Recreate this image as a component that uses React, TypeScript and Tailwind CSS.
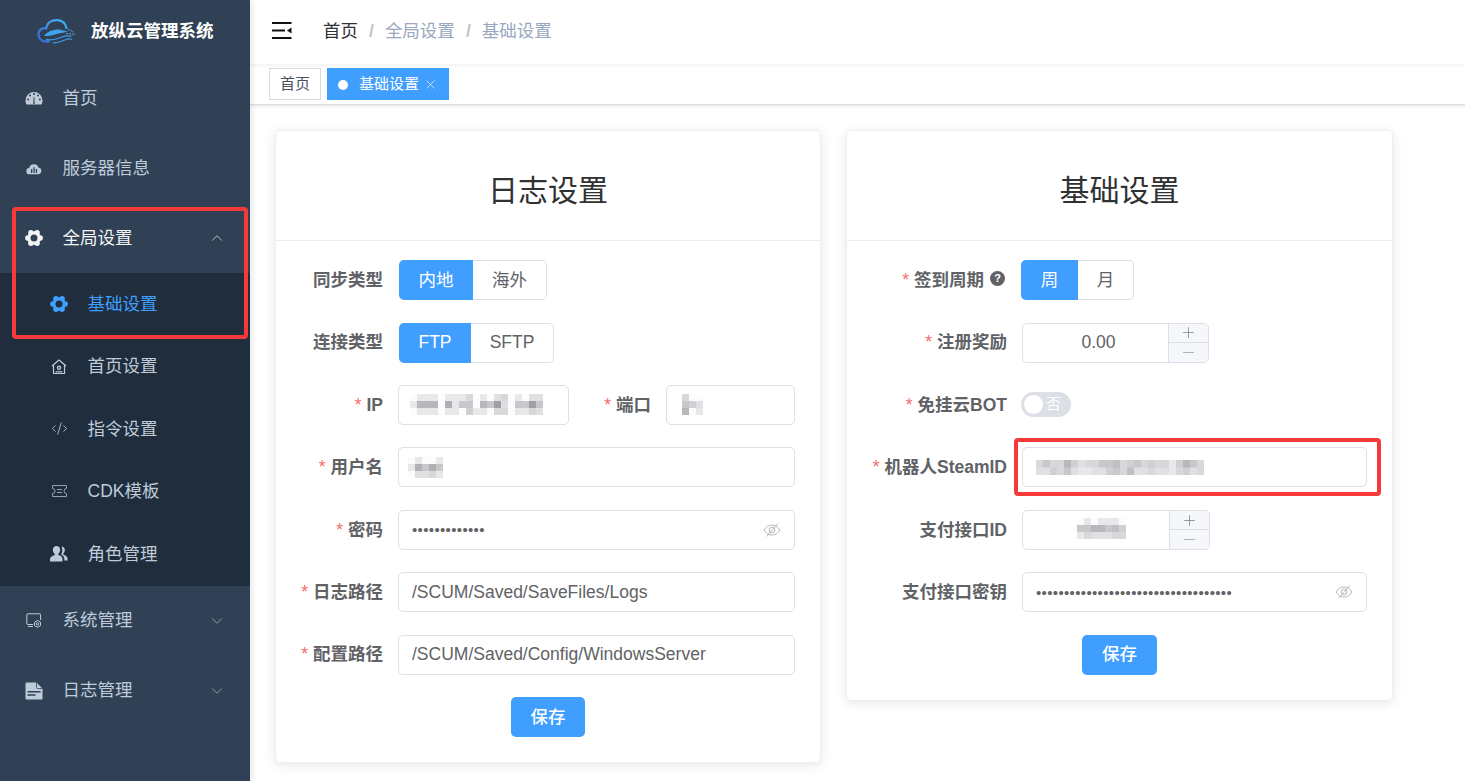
import type { ReactNode } from 'react'
import { ChevronDown, ChevronUp, Code2, Minus, Plus, X } from 'lucide-react'

const fontStack = "font-['Liberation_Sans','Noto_Sans_CJK_SC',sans-serif]"

const lobes = [0, 60, 120, 180, 240, 300]

function GearIcon({ color, hole, className }: { color: string; hole: string; className: string }) {
  return (
    <svg viewBox="0 0 18 18" className={className}>
      <circle cx="9" cy="9" r="6.800" fill={color} />
      {lobes.map((a) => (
        <circle key={a} cx={9 + 6.200 * Math.cos((a * Math.PI) / 180)} cy={9 + 6.200 * Math.sin((a * Math.PI) / 180)} r="2.700" fill={color} />
      ))}
      <circle cx="9" cy="9" r="3.500" fill={hole} />
    </svg>
  )
}

function GaugeIcon() {
  return (
    <svg viewBox="0 0 18 16" className="w-[18px] h-4">
      <path d="M0.500 10.500a8.500 8.500 0 0 1 17 0c0 1.800-.4 3-1 4H1.500c-.6-1-1-2.200-1-4z" fill="#bfcbd9" />
      <g fill="#304156">
        <circle cx="9" cy="4" r="1" />
        <circle cx="5" cy="5.600" r="1" />
        <circle cx="13" cy="5.600" r="1" />
        <circle cx="3.200" cy="9.400" r="1" />
        <circle cx="14.800" cy="9.400" r="1" />
        <path d="M8.300 14l.3-7h.8l.3 7z" />
      </g>
    </svg>
  )
}

function CloudIcon() {
  return (
    <svg viewBox="0 0 18 14" className="w-4 h-[13px]">
      <path d="M4.200 13.500a3.500 3.500 0 0 1-.6-7A5.400 5.400 0 0 1 14 5.800a3.900 3.900 0 0 1 0 7.700z" fill="#bfcbd9" />
      <g fill="#304156">
        <rect x="5.600" y="7.600" width="1.500" height="4.400" />
        <rect x="8.300" y="5.600" width="1.500" height="6.400" />
        <rect x="11" y="7.600" width="1.500" height="4.400" />
      </g>
    </svg>
  )
}

function HomeGearIcon() {
  return (
    <svg viewBox="0 0 16 16" fill="none" stroke="#bfcbd9" strokeWidth="1.200" className="w-4 h-4">
      <path d="M1 7l7-6 7 6M2.500 6v8.500h11V6" strokeLinejoin="round" />
      <circle cx="8" cy="8.800" r="2.200" fill="#bfcbd9" stroke="none" />
      <circle cx="8" cy="8.800" r=".9" fill="#1f2d3d" stroke="none" />
      <path d="M4.500 12.800h7" />
    </svg>
  )
}

function TicketIcon() {
  return (
    <svg viewBox="0 0 15 12" fill="none" stroke="#94a1b1" strokeWidth="1" className="w-[15px] h-3">
      <path d="M.5.500h14v3a2.500 2.500 0 0 0 0 5v3H.5v-3a2.500 2.500 0 0 0 0-5z" />
      <path d="M5 4.500h5M5 7.500h5" />
    </svg>
  )
}

function UsersIcon() {
  return (
    <svg viewBox="0 0 18 17" fill="#bfcbd9" className="w-[18px] h-[17px]">
      <path d="M6.500 1a3.600 3.600 0 0 1 3.600 4c0 1.700-.8 3.100-1.800 3.800v1.200c2.200.6 4.200 1.800 4.200 3.500V16.500H0v-2.500c0-1.700 2.500-3.300 4.700-4V8.800C3.700 8.100 2.900 6.700 2.900 5A3.600 3.600 0 0 1 6.500 1z" />
      <path d="M11.500 1.500c2 0 3.300 1.500 3.300 3.500 0 1.500-.6 2.800-1.500 3.500v1.200c2 .6 4.200 1.700 4.200 3.600v2.200h-3.200v-2c0-1.700-1.300-3-3.300-4 .9-1.200 1.300-2.700 1.300-4.500 0-1.500-.3-2.600-.8-3.500z" />
    </svg>
  )
}

function MonitorGearIcon() {
  return (
    <svg viewBox="0 0 16 15" fill="none" stroke="#bfcbd9" strokeWidth="1" className="w-4 h-[15px]">
      <path d="M7 11.500H2a1.200 1.200 0 0 1-1.200-1.200V2A1.200 1.200 0 0 1 2 .800h11.400A1.200 1.200 0 0 1 14.600 2v5" />
      <path d="M2 13.500h5" />
      <polygon points="11.500,7.500 14.500,9.200 14.500,12.600 11.500,14.300 8.500,12.600 8.500,9.200" />
      <circle cx="11.500" cy="10.900" r="1.200" />
    </svg>
  )
}

function DocumentIcon() {
  return (
    <svg viewBox="0 0 18 18" className="w-[18px] h-[18px]">
      <path d="M1.500.500h10l6 6v10a1 1 0 0 1-1 1h-15a1 1 0 0 1-1-1v-15a1 1 0 0 1 1-1z" fill="#bfcbd9" />
      <path d="M11.500.500v5a1 1 0 0 0 1 1h5" fill="none" stroke="#304156" strokeWidth=".8" />
      <path d="M2.500 9.800h13M2.500 13h8" stroke="#304156" strokeWidth="1.500" />
    </svg>
  )
}

function LogoIcon() {
  return (
    <svg viewBox="0 0 40 25" fill="none" className="w-10 h-[25px]">
      <defs>
        <linearGradient id="logoGrad" x1="0" y1="1" x2="1" y2="0">
          <stop offset="0" stopColor="#3a62d8" />
          <stop offset="0.500" stopColor="#3f8fe8" />
          <stop offset="1" stopColor="#3fb8f0" />
        </linearGradient>
      </defs>
      <path d="M12 22.500C5 23.500 1.500 19.500 1.500 15.500 1.500 11 5 8.500 9 9.500 10 4 14.500 1.200 20 1.200c5 0 9 3.300 9.500 8" stroke="url(#logoGrad)" strokeWidth="2.200" strokeLinecap="round" />
      <path d="M7 17C10 12 18 10 22 10.500c3 .5 5 1.500 9 2-5 1.500-9 1.500-13 3-4 1.500-8 1.500-11 1.500z" fill="#3fa6ee" />
      <path d="M9 20.500c6 1.500 11-.5 16-2.500 3-1.200 6-1.500 9.500-.8" stroke="#3f9be8" strokeWidth="1.300" />
      <path d="M16 23.800c5 .5 9-1.800 13-3.300 2-.8 4-.8 6-.3" stroke="#3f9be8" strokeWidth="1.100" />
      <path d="M29 14.800c3-.5 6 0 9.500 1M31 10.500c2 .3 4 1.500 6 2.800" stroke="#6bb8ee" strokeWidth=".9" strokeDasharray="2 1" />
    </svg>
  )
}

function MenuFoldIcon() {
  return (
    <svg viewBox="0 0 20 17" className="w-5 h-[17px]">
      <path d="M0 1h19.500M0 8.500h13M0 16h19.500" stroke="#111" strokeWidth="2" />
      <path d="M19.500 5.500v6L15 8.500z" fill="#111" />
    </svg>
  )
}

function EyeOffIcon() {
  return (
    <svg viewBox="0 0 18 16" fill="none" stroke="#b4b7bd" strokeWidth="1" className="w-[18px] h-4">
      <path d="M1 8c2-3.200 4.800-5 8-5s6 1.800 8 5c-2 3.200-4.800 5-8 5S3 11.200 1 8z" />
      <circle cx="9" cy="8" r="2.800" />
      <path d="M3.500 14.500 15 1.500" />
    </svg>
  )
}

// grey blocks standing in for the blurred values, one hex digit per cell
function Mosaic({ rows, cellH = 7 }: { rows: string[]; cellH?: number }) {
  const cell = 7
  return (
    <svg width={rows[0].length * cell} height={rows.length * cellH} className="block shrink-0 blur-[0.5px]">
      {rows.map((row, y) =>
        row.split('').map((c, x) => {
          const n = parseInt(c, 16)
          const v = n === 15 ? 252 : 120 + n * 8
          return <rect key={x} x={x * cell} y={y * cellH} width={cell + 0.5} height={cellH + 0.5} fill={`rgb(${v},${v},${v + 2})`} />
        })
      )}
    </svg>
  )
}

function SideItem({ icon, label, color = 'text-[#bfcbd9]', chevron }: { icon: ReactNode; label: string; color?: string; chevron?: 'up' | 'down' }) {
  return (
    <div className={`flex items-center h-[70px] pl-[25px] pr-[24px] ${color}`}>
      <span className="w-[18px] flex justify-center">{icon}</span>
      <span className="ml-[19.500px] flex-1">{label}</span>
      {chevron === 'up' && <ChevronUp className="w-[18px] h-[18px] text-[#d5dae1]" strokeWidth={1.100} />}
      {chevron === 'down' && <ChevronDown className="w-[18px] h-[18px] text-[#a0a8b4]" strokeWidth={1.100} />}
    </div>
  )
}

function SubItem({ icon, label, color = 'text-[#bfcbd9]' }: { icon: ReactNode; label: string; color?: string }) {
  return (
    <div className={`flex items-center h-[62.400px] pl-[50px] ${color}`}>
      <span className="w-[18px] flex justify-center">{icon}</span>
      <span className="ml-[19.500px]">{label}</span>
    </div>
  )
}

function Sidebar() {
  return (
    <aside className="w-[250px] shrink-0 bg-[#304156] z-10 shadow-[2px_0_6px_rgba(0,21,41,0.1)]">
      <div className="h-[63px] flex items-center pl-[37px]">
        <LogoIcon />
        <span className="ml-[14px] font-bold text-white">放纵云管理系统</span>
      </div>
      <SideItem icon={<GaugeIcon />} label="首页" />
      <SideItem icon={<CloudIcon />} label="服务器信息" />
      <SideItem
        icon={<GearIcon color="#f4f4f5" hole="#304156" className="w-[18px] h-[18px]" />}
        label="全局设置"
        color="text-[#f4f4f5]"
        chevron="up"
      />
      <div className="bg-[#1f2d3d] h-[312.500px]">
        <SubItem icon={<GearIcon color="#409eff" hole="#1f2d3d" className="w-[18px] h-[18px]" />} label="基础设置" color="text-[#409eff]" />
        <SubItem icon={<HomeGearIcon />} label="首页设置" />
        <SubItem icon={<Code2 className="w-[17px] h-[17px]" strokeWidth={1.200} />} label="指令设置" />
        <SubItem icon={<TicketIcon />} label="CDK模板" />
        <SubItem icon={<UsersIcon />} label="角色管理" />
      </div>
      <SideItem icon={<MonitorGearIcon />} label="系统管理" chevron="down" />
      <SideItem icon={<DocumentIcon />} label="日志管理" chevron="down" />
    </aside>
  )
}

function Navbar() {
  return (
    <div className="h-[64px] flex items-center pb-px bg-white shadow-[0_1px_4px_rgba(0,21,41,0.08)] z-[2] relative">
      <span className="ml-[22px] mr-[31px] mb-[3px] flex"><MenuFoldIcon /></span>
      <span className="text-[#303133]">首页</span>
      <span className="mx-[11px] font-bold text-[#c0c4cc]">/</span>
      <span className="text-[#97a8be]">全局设置</span>
      <span className="mx-[11px] font-bold text-[#c0c4cc]">/</span>
      <span className="text-[#97a8be]">基础设置</span>
    </div>
  )
}

function TagsBar() {
  return (
    <div className="h-[41px] flex items-start pt-[4px] pl-[19px] gap-[6px] bg-white text-[15px] border-b border-[#d8dce5] shadow-[0_1px_3px_rgba(0,0,0,0.12)] z-[1] relative">
      <div className="h-8 w-[52px] pt-px flex items-center justify-center border border-[#d8dce5] text-[#495060]">首页</div>
      <div className="h-8 w-[122px] pt-px flex items-center bg-[#409eff] text-white pl-[11px]">
        <span className="w-[10px] h-[10px] rounded-full bg-white" />
        <span className="ml-[11px]">基础设置</span>
        <X className="w-[15px] h-[15px] ml-[4px]" strokeWidth={1} />
      </div>
    </div>
  )
}

function Label({ text, required, width }: { text: string; required?: boolean; width: string }) {
  return (
    <label className={`${width} shrink-0 pr-[15px] text-right font-bold text-[#606266] whitespace-nowrap`}>
      {required && <span className="text-[#f56c6c] font-normal mr-[5px]">*</span>}
      {text}
    </label>
  )
}

function Field({ children, className = 'flex-1' }: { children?: ReactNode; className?: string }) {
  return (
    <div className={`${className} h-10 flex items-center px-[13px] bg-white border border-[#dcdfe6] rounded-[5px] text-[#606266]`}>
      {children}
    </div>
  )
}

function PasswordField({ count }: { count: number }) {
  return (
    <Field>
      <span className="flex-1 text-[15px] tracking-[0.35px] leading-none">{'•'.repeat(count)}</span>
      <EyeOffIcon />
    </Field>
  )
}

function RadioGroup({ options }: { options: { label: string; width: string }[] }) {
  return (
    <div className="flex h-10">
      {options.map((o, i) => (
        <div
          key={o.label}
          className={
            i === 0
              ? `${o.width} flex items-center justify-center bg-[#409eff] text-white rounded-l-[5px]`
              : `${o.width} flex items-center justify-center bg-white text-[#606266] border border-l-0 border-[#dcdfe6] rounded-r-[5px]`
          }
        >
          {o.label}
        </div>
      ))}
    </div>
  )
}

function NumberInput({ children, width }: { children: ReactNode; width: string }) {
  return (
    <div className={`${width} h-10 flex border border-[#dcdfe6] rounded-[5px] text-[#606266] overflow-hidden`}>
      <div className="flex-1 flex items-center justify-center pl-[6px]">{children}</div>
      <div className="w-[40px] flex flex-col bg-[#f5f7fa] border-l border-[#dcdfe6]">
        <span className="flex-1 flex items-center justify-center border-b border-[#dcdfe6] text-[#85888e]">
          <Plus className="w-[17px] h-[17px]" strokeWidth={1.200} />
        </span>
        <span className="flex-1 flex items-center justify-center text-[#a0a3a9]">
          <Minus className="w-[17px] h-[17px]" strokeWidth={1.200} />
        </span>
      </div>
    </div>
  )
}

function SaveButton({ width }: { width: string }) {
  return (
    <div className="flex justify-center">
      <button className={`${width} h-10 rounded-[5px] bg-[#409eff] text-white font-medium`}>保存</button>
    </div>
  )
}

function Card({ title, children, className }: { title: string; children: ReactNode; className: string }) {
  return (
    <section className={`${className} bg-white border border-[#ebeef5] rounded-[5px] shadow-[0_2px_12px_rgba(0,0,0,0.1)]`}>
      <h2 className="h-[110px] pt-[10px] flex items-center justify-center text-[30px] text-[#303133] border-b border-[#ebeef5]">{title}</h2>
      <div className="flex flex-col gap-[22.400px] pt-[19.200px] pb-[25px] px-[25px]">{children}</div>
    </section>
  )
}

function LogSettings() {
  const lw = 'w-[97px]'
  return (
    <Card title="日志设置" className="w-[546px]">
      <div className="flex items-center">
        <Label text="同步类型" width={lw} />
        <div className="ml-px">
          <RadioGroup options={[{ label: '内地', width: 'w-[74px]' }, { label: '海外', width: 'w-[74px]' }]} />
        </div>
      </div>
      <div className="flex items-center">
        <Label text="连接类型" width={lw} />
        <div className="ml-px">
          <RadioGroup options={[{ label: 'FTP', width: 'w-[72px]' }, { label: 'SFTP', width: 'w-[83px]' }]} />
        </div>
      </div>
      <div className="flex items-center">
        <Label text="IP" required width={lw} />
        <Field className="w-[171px]">
          <span className="-ml-[2px]">
            <Mosaic rows={['feeefeeecfefdcfefdd', 'e888f7eaaf8a5dfaa5a', 'feeefeefbeefccfeecd']} />
          </span>
        </Field>
        <Label text="端口" required width="w-[97px]" />
        <Field className="flex-1">
          <span className="ml-[2px]"><Mosaic rows={['cff', 'abd', '8fe']} /></span>
        </Field>
      </div>
      <div className="flex items-center">
        <Label text="用户名" required width={lw} />
        <Field>
          <span className="-ml-[4px]"><Mosaic rows={['feffe', 'e7a7a', 'fddce']} /></span>
        </Field>
      </div>
      <div className="flex items-center">
        <Label text="密码" required width={lw} />
        <PasswordField count={13} />
      </div>
      <div className="flex items-center">
        <Label text="日志路径" required width={lw} />
        <Field>/SCUM/Saved/SaveFiles/Logs</Field>
      </div>
      <div className="flex items-center">
        <Label text="配置路径" required width={lw} />
        <Field>/SCUM/Saved/Config/WindowsServer</Field>
      </div>
      <SaveButton width="w-[74px]" />
    </Card>
  )
}

function BasicSettings() {
  const lw = 'w-[150px]'
  return (
    <Card title="基础设置" className="w-[547px]">
      <div className="flex items-center">
        <label className={`${lw} shrink-0 pr-[17px] flex items-center justify-end font-bold text-[#606266]`}>
          <span className="text-[#f56c6c] font-normal mr-[5px]">*</span>
          签到周期
          <span className="ml-[6px] mb-[3px] w-[15px] h-[15px] rounded-full bg-[#606266] text-white text-[11px] leading-none flex items-center justify-center">?</span>
        </label>
        <div className="-ml-px">
          <RadioGroup options={[{ label: '周', width: 'w-[57px]' }, { label: '月', width: 'w-[56px]' }]} />
        </div>
      </div>
      <div className="flex items-center">
        <Label text="注册奖励" required width={lw} />
        <NumberInput width="w-[187px]">0.00</NumberInput>
      </div>
      <div className="flex items-center h-10">
        <Label text="免挂云BOT" required width={lw} />
        <div className="-ml-px mb-px w-[50px] h-[25px] rounded-full bg-[#dcdfe6] flex items-center pl-[3px]">
          <span className="w-[19px] h-[19px] rounded-full bg-white" />
          <span className="ml-[3px] text-[15px] text-white">否</span>
        </div>
      </div>
      <div className="flex items-center">
        <Label text="机器人SteamID" required width={lw} />
        <Field>
          <Mosaic cellH={7.500} rows={['cacc8bdccaa9cbacbcceb8ac', 'ddbcadeeddbac9ddcddecbdc']} />
        </Field>
      </div>
      <div className="flex items-center">
        <Label text="支付接口ID" width={lw} />
        <NumberInput width="w-[188px]">
          <span className="ml-[5px] mb-[3px]">
            <Mosaic rows={['fefeeef', 'aa88a9b', 'ecdddcc']} />
          </span>
        </NumberInput>
      </div>
      <div className="flex items-center">
        <Label text="支付接口密钥" width={lw} />
        <PasswordField count={35} />
      </div>
      <SaveButton width="w-[75px]" />
    </Card>
  )
}

export default function App() {
  return (
    <div className={`relative flex h-[781px] w-[1465px] overflow-hidden bg-white text-[17.500px] ${fontStack}`}>
      <Sidebar />
      <main className="flex-1 flex flex-col min-w-0">
        <Navbar />
        <TagsBar />
        <div className="flex items-start gap-[25px] pt-[25px] pl-[25px]">
          <LogSettings />
          <BasicSettings />
        </div>
      </main>
      {/* red annotation boxes drawn over the screenshot */}
      <div className="absolute z-20 left-[12px] top-[207px] w-[236px] h-[132px] border-4 border-[#f63a3a] rounded-[4px]" />
      <div className="absolute z-20 left-[1014px] top-[438px] w-[367px] h-[58px] border-4 border-[#f63a3a] rounded-[4px]" />
    </div>
  )
}
